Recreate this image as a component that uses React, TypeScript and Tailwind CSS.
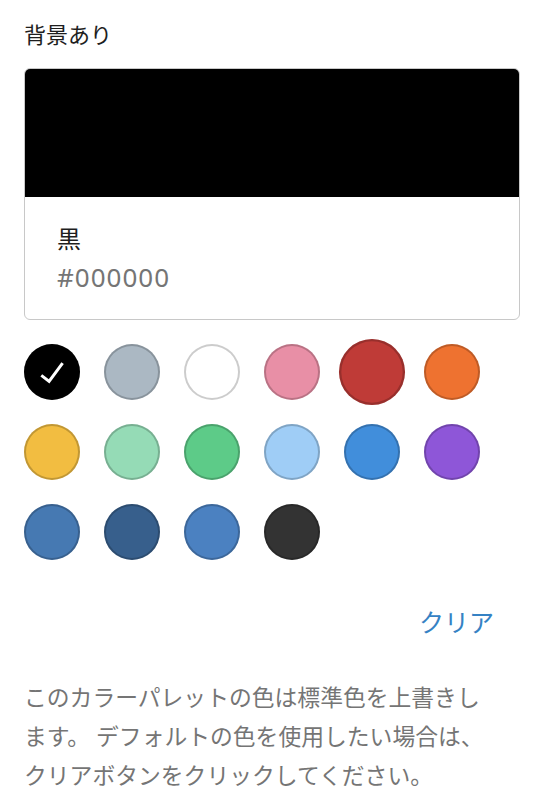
import { useState } from 'react';

const colors = [
  { name: '黒', hex: '#000000' },
  { name: 'グレー', hex: '#abb8c3' },
  { name: '白', hex: '#ffffff' },
  { name: 'ピンク', hex: '#e88fa6' },
  { name: '赤', hex: '#bf3b37' },
  { name: 'オレンジ', hex: '#ee7230' },
  { name: '黄', hex: '#f2bd41' },
  { name: '薄緑', hex: '#95dbb6' },
  { name: '緑', hex: '#5dcb88' },
  { name: '水色', hex: '#9fcdf6' },
  { name: '青', hex: '#418edb' },
  { name: '紫', hex: '#8e56d8' },
  { name: '青2', hex: '#4679b2' },
  { name: '紺', hex: '#375f8c' },
  { name: '青3', hex: '#4b81c1' },
  { name: '濃灰', hex: '#333333' },
];

export default function App() {
  const [selected, setSelected] = useState(0);
  const hovered = 4;
  const current = colors[selected];

  return (
    <div
      className="w-[548px] min-h-[808px] bg-white pl-6 pr-7 pt-[19px]"
      style={{ fontFamily: '"Noto Sans", "Noto Sans CJK JP", sans-serif' }}
    >
      {/* Label */}
      <div className="text-[22px] leading-[30px] text-[#1e1e1e]">背景あり</div>

      {/* Current colour card */}
      <div className="mt-[19px] rounded-[6px] border border-[#c8c8c8] overflow-hidden">
        <div className="h-[128px]" style={{ backgroundColor: current.hex }} />
        <div className="pl-[32px] pt-[25px] pb-[25px]">
          <div className="text-[24px] leading-[34px] text-[#1e1e1e]">{current.name}</div>
          <div className="mt-[4px] text-[26px] leading-[34px] tracking-[1px] text-[#757575]">{current.hex}</div>
        </div>
      </div>

      {/* Swatches */}
      <div className="mt-[24px] flex flex-wrap gap-6">
        {colors.map((c, i) => (
          <button
            key={c.hex}
            onClick={() => setSelected(i)}
            className={`relative flex w-14 h-14 items-center justify-center rounded-full shadow-[inset_0_0_0_2px_rgba(0,0,0,0.2)] ${
              i === hovered ? 'scale-[1.18]' : ''
            }`}
            style={{ backgroundColor: c.hex }}
            aria-label={c.name}
          >
            {i === selected && (
              <svg width="48" height="48" viewBox="0 0 24 24" className="fill-white">
                <path d="M16.7 7.1l-6.3 8.5-3.3-2.5-.9 1.2 4.5 3.4L17.9 8z" />
              </svg>
            )}
          </button>
        ))}
      </div>

      {/* Clear */}
      <div className="mt-[44px] flex justify-end">
        <button className="pr-[26px] text-[25px] leading-[36px] text-[#3582c4]">クリア</button>
      </div>

      {/* Help */}
      <p className="mt-[38px] w-[472px] text-[22.8px] leading-[39px] text-[#757575]">
        このカラーパレットの色は標準色を上書きします。 デフォルトの色を使用したい場合は、クリアボタンをクリックしてください。
      </p>
    </div>
  );
}
